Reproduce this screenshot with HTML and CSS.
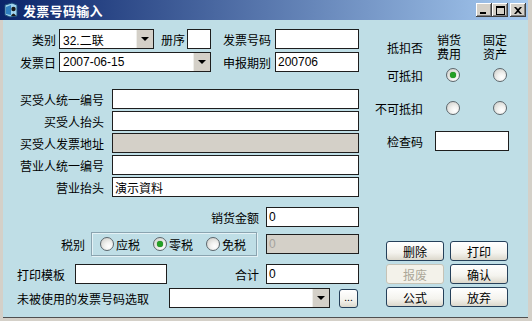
FILE: index.html
```html
<!DOCTYPE html>
<html lang="zh-CN">
<head>
  <meta charset="UTF-8" />
  <title>发票号码输入</title>
  <link rel="stylesheet" href="styles.css">
</head>
<body>
  <div class="window">
    <div class="titlebar">
      <svg class="app-icon" viewBox="0 0 16 16">
        <path d="M2 3 L9 1 L14 3 L14 14 L7 15 L2 13 Z" fill="#9fd3ee" stroke="#1d4f7a" stroke-width="1"/>
        <path d="M3 5 L8 3 L8 13 L3 12 Z" fill="#2f7fc0"/>
        <circle cx="10.5" cy="7" r="2.2" fill="#1a1a1a"/>
        <path d="M8 14 Q10.5 9 13 14 Z" fill="#1a1a1a"/>
      </svg>
      <span class="title">发票号码输入</span>
      <div class="caption-buttons">
        <span class="cap-btn"><svg width="8" height="8" viewBox="0 0 8 8"><rect x="0" y="6" width="6" height="2" fill="#000"/></svg></span>
        <span class="cap-btn"><svg width="9" height="9" viewBox="0 0 9 9"><rect x="0.5" y="0.5" width="8" height="8" fill="none" stroke="#000"/><rect x="0" y="0" width="9" height="2" fill="#000"/></svg></span>
        <span class="cap-btn close"><svg width="8" height="7" viewBox="0 0 8 7"><path d="M0 0h2l2 2 2-2h2L5 3.5 8 7H6L4 5 2 7H0l3-3.5z" fill="#000"/></svg></span>
      </div>
    </div>

    <div class="client">
      <div class="left">
        <div class="row">
          <span class="lbl w-53">类别</span>
          <div class="combo w-95"><span class="combo-text">32.二联</span><span class="drop"></span></div>
          <span class="lbl lbl-volume">册序</span>
          <div class="field w-24"></div>
          <span class="lbl lbl-no">发票号码</span>
          <div class="field w-84"></div>
        </div>
        <div class="row mt-3">
          <span class="lbl w-53">发票日</span>
          <div class="combo w-152"><span class="combo-text">2007-06-15</span><span class="drop"></span></div>
          <span class="lbl lbl-no">申报期别</span>
          <div class="field w-84"><span class="val">200706</span></div>
        </div>

        <div class="row mt-17">
          <span class="lbl w-101">买受人统一编号</span>
          <div class="field w-247"></div>
        </div>
        <div class="row mt-2">
          <span class="lbl w-101">买受人抬头</span>
          <div class="field w-247"></div>
        </div>
        <div class="row mt-2">
          <span class="lbl w-101">买受人发票地址</span>
          <div class="field w-247 disabled"></div>
        </div>
        <div class="row mt-2">
          <span class="lbl w-101">营业人统一编号</span>
          <div class="field w-247"></div>
        </div>
        <div class="row mt-2">
          <span class="lbl w-101">营业抬头</span>
          <div class="field w-247"><span class="val">演示資料</span></div>
        </div>

        <div class="row mt-10">
          <span class="lbl w-256">销货金额</span>
          <div class="field w-93"><span class="val">0</span></div>
        </div>
        <div class="row row-tax mt-5">
          <span class="lbl w-82">税别</span>
          <div class="groupbox">
            <span class="radio"></span><span class="opt">应税</span>
            <span class="radio on"></span><span class="opt">零税</span>
            <span class="radio"></span><span class="opt">免税</span>
          </div>
          <div class="field w-93 disabled"><span class="val">0</span></div>
        </div>
        <div class="row mt-8">
          <span class="lbl lbl-print">打印模板</span>
          <div class="field w-92"></div>
          <span class="lbl w-92-lbl">合计</span>
          <div class="field w-93"><span class="val">0</span></div>
        </div>
        <div class="row mt-4">
          <span class="lbl lbl-unused">未被使用的发票号码选取</span>
          <div class="combo w-161"><span class="combo-text"></span><span class="drop"></span></div>
          <span class="btn btn-more">...</span>
        </div>
      </div>

      <div class="right">
        <div class="head">
          <span class="rlbl">抵扣否</span>
          <span class="col-head">销货<br>费用</span>
          <span class="col-head second">固定<br>资产</span>
        </div>
        <div class="radio-row">
          <span class="rlbl">可抵扣</span>
          <span class="radio on first"></span>
          <span class="radio second"></span>
        </div>
        <div class="radio-row mt-19">
          <span class="rlbl">不可抵扣</span>
          <span class="radio first"></span>
          <span class="radio second"></span>
        </div>
        <div class="check-row">
          <span class="rlbl">检查码</span>
          <div class="field w-74"></div>
        </div>
        <div class="buttons">
          <span class="btn">删除</span>
          <span class="btn">打印</span>
          <span class="btn off">报废</span>
          <span class="btn">确认</span>
          <span class="btn">公式</span>
          <span class="btn">放弃</span>
        </div>
      </div>
    </div>
  </div>
</body>
</html>
```

FILE: styles.css
```css
* {
  box-sizing: border-box;
}

body {
  margin: 0;
  font-family: "Noto Sans CJK SC", "Liberation Sans", sans-serif;
  font-size: 12px;
  color: #000;
}

.window {
  width: 532px;
  height: 321px;
  background: #d4d0c8;
  padding-right: 4px;
  overflow: hidden;
}

/* title bar */
.titlebar {
  height: 20px;
  display: flex;
  align-items: center;
  padding-left: 3px;
  background: linear-gradient(to right, #0a246a, #a6caf0);
}

.app-icon {
  width: 16px;
  height: 16px;
}

.title {
  margin-left: 4px;
  color: #fff;
  font-weight: bold;
  font-size: 13px;
  letter-spacing: 0.3px;
}

.caption-buttons {
  margin-left: auto;
  margin-right: 2px;
  display: flex;
}

.cap-btn {
  width: 16px;
  height: 14px;
  display: flex;
  align-items: center;
  justify-content: center;
  background: #d4d0c8;
  box-shadow: inset -1px -1px #404040, inset 1px 1px #fff, inset -2px -2px #808080;
}

.cap-btn.close {
  margin-left: 2px;
}

/* client area */
.client {
  margin-left: 3px;
  height: 297px;
  display: flex;
  background: #bfdee6;
  box-shadow: 0 1px #505050;
}

.left {
  width: 356px;
  padding-top: 9px;
}

.row {
  display: flex;
  align-items: center;
  height: 20px;
}

.row-tax {
  height: 24px;
}

.lbl {
  text-align: right;
  white-space: nowrap;
  flex: none;
}

.w-53 { width: 53px; margin-right: 3px; }
.w-101 { width: 101px; margin-right: 8px; }
.w-256 { width: 256px; margin-right: 7px; }
.w-82 { width: 82px; margin-right: 6px; }
.w-92-lbl { width: 92px; margin-right: 7px; }

.lbl-volume { width: 24px; margin-left: 7px; margin-right: 2px; }
.lbl-no { width: 48px; margin-left: 12px; margin-right: 4px; }
.lbl-print { width: 48px; margin-left: 14px; margin-right: 10px; }
.lbl-unused { width: 132px; margin-left: 14px; margin-right: 20px; text-align: left; }

.mt-2 { margin-top: 2px; }
.mt-3 { margin-top: 3px; }
.mt-4 { margin-top: 4px; }
.mt-5 { margin-top: 5px; }
.mt-8 { margin-top: 8px; }
.mt-10 { margin-top: 10px; }
.mt-17 { margin-top: 17px; }

/* text boxes */
.field {
  height: 20px;
  flex: none;
  background: #fff;
  border: 1px solid #1e1e1e;
  display: flex;
  align-items: center;
  padding-left: 2px;
}

.field.disabled {
  background: #d4d0c8;
  color: #a4a29c;
}

.val,
.combo-text {
  font-family: "Liberation Sans", "Noto Sans CJK TC", sans-serif;
  font-size: 12px;
}

.w-24 { width: 24px; }
.w-74 { width: 74px; }
.w-84 { width: 84px; }
.w-92 { width: 92px; }
.w-93 { width: 93px; }
.w-95 { width: 95px; }
.w-152 { width: 152px; }
.w-161 { width: 161px; }
.w-247 { width: 247px; }

.row-tax .field {
  margin-left: 9px;
}

/* combo boxes */
.combo {
  height: 20px;
  flex: none;
  display: flex;
  background: #fff;
  border: 1px solid #1e1e1e;
}

.combo-text {
  flex: 1;
  padding-left: 3px;
  display: flex;
  align-items: center;
}

.drop {
  width: 17px;
  background: #d4d0c8;
  border-left: 1px solid #eeeeea;
  position: relative;
}

.drop::after {
  content: "";
  position: absolute;
  left: 4px;
  top: 7px;
  border-left: 4px solid transparent;
  border-right: 4px solid transparent;
  border-top: 4px solid #000;
}

/* radio buttons */
.radio {
  width: 14px;
  height: 14px;
  flex: none;
  border-radius: 50%;
  border: 1px solid #5c666c;
  background: radial-gradient(circle at 65% 70%, #ffffff 0%, #f2f2f0 35%, #c9c9c4 100%);
}

.radio.on::after {
  content: "";
  display: block;
  width: 6px;
  height: 6px;
  margin: 3px;
  border-radius: 50%;
  background: #25a025;
  box-shadow: 0 0 1px #136613;
}

.groupbox {
  width: 166px;
  height: 24px;
  flex: none;
  display: flex;
  align-items: center;
  padding-left: 8px;
  border: 1px solid #8ba4b0;
  box-shadow: inset 1px 1px #e4f2f6, 1px 1px #e4f2f6;
}

.opt {
  flex: none;
  white-space: nowrap;
  margin-left: 2px;
  margin-right: 13px;
}

/* right column */
.right {
  width: 169px;
  padding-top: 13px;
}

.rlbl {
  width: 64px;
  flex: none;
  text-align: right;
  white-space: nowrap;
}

.head {
  display: flex;
  align-items: center;
  height: 28px;
}

.col-head {
  width: 24px;
  margin-left: 14px;
  line-height: 14px;
  text-align: center;
}

.col-head.second {
  margin-left: 22px;
}

.radio-row {
  display: flex;
  align-items: center;
  height: 14px;
  margin-top: 7px;
}

.radio-row.mt-19 {
  margin-top: 19px;
}

.radio.first {
  margin-left: 23px;
}

.radio.second {
  margin-left: 33px;
}

.check-row {
  display: flex;
  align-items: center;
  height: 20px;
  margin-top: 16px;
}

.check-row .field {
  margin-left: 12px;
}

/* push buttons */
.buttons {
  display: grid;
  grid-template-columns: 58px 58px;
  grid-auto-rows: 20px;
  column-gap: 6px;
  row-gap: 3px;
  margin-top: 90px;
  margin-left: 27px;
}

.btn {
  display: flex;
  align-items: center;
  justify-content: center;
  border: 1px solid #25405a;
  border-radius: 3px;
  background: linear-gradient(#ffffff, #f4f3ee 60%, #dcd8cc);
}

.btn.off {
  border-color: #c6c3b6;
  background: #f3f2ea;
  color: #aca899;
}

.btn-more {
  width: 19px;
  height: 19px;
  flex: none;
  margin-left: 9px;
  font-size: 10px;
  align-items: flex-end;
  padding-bottom: 3px;
}
```
